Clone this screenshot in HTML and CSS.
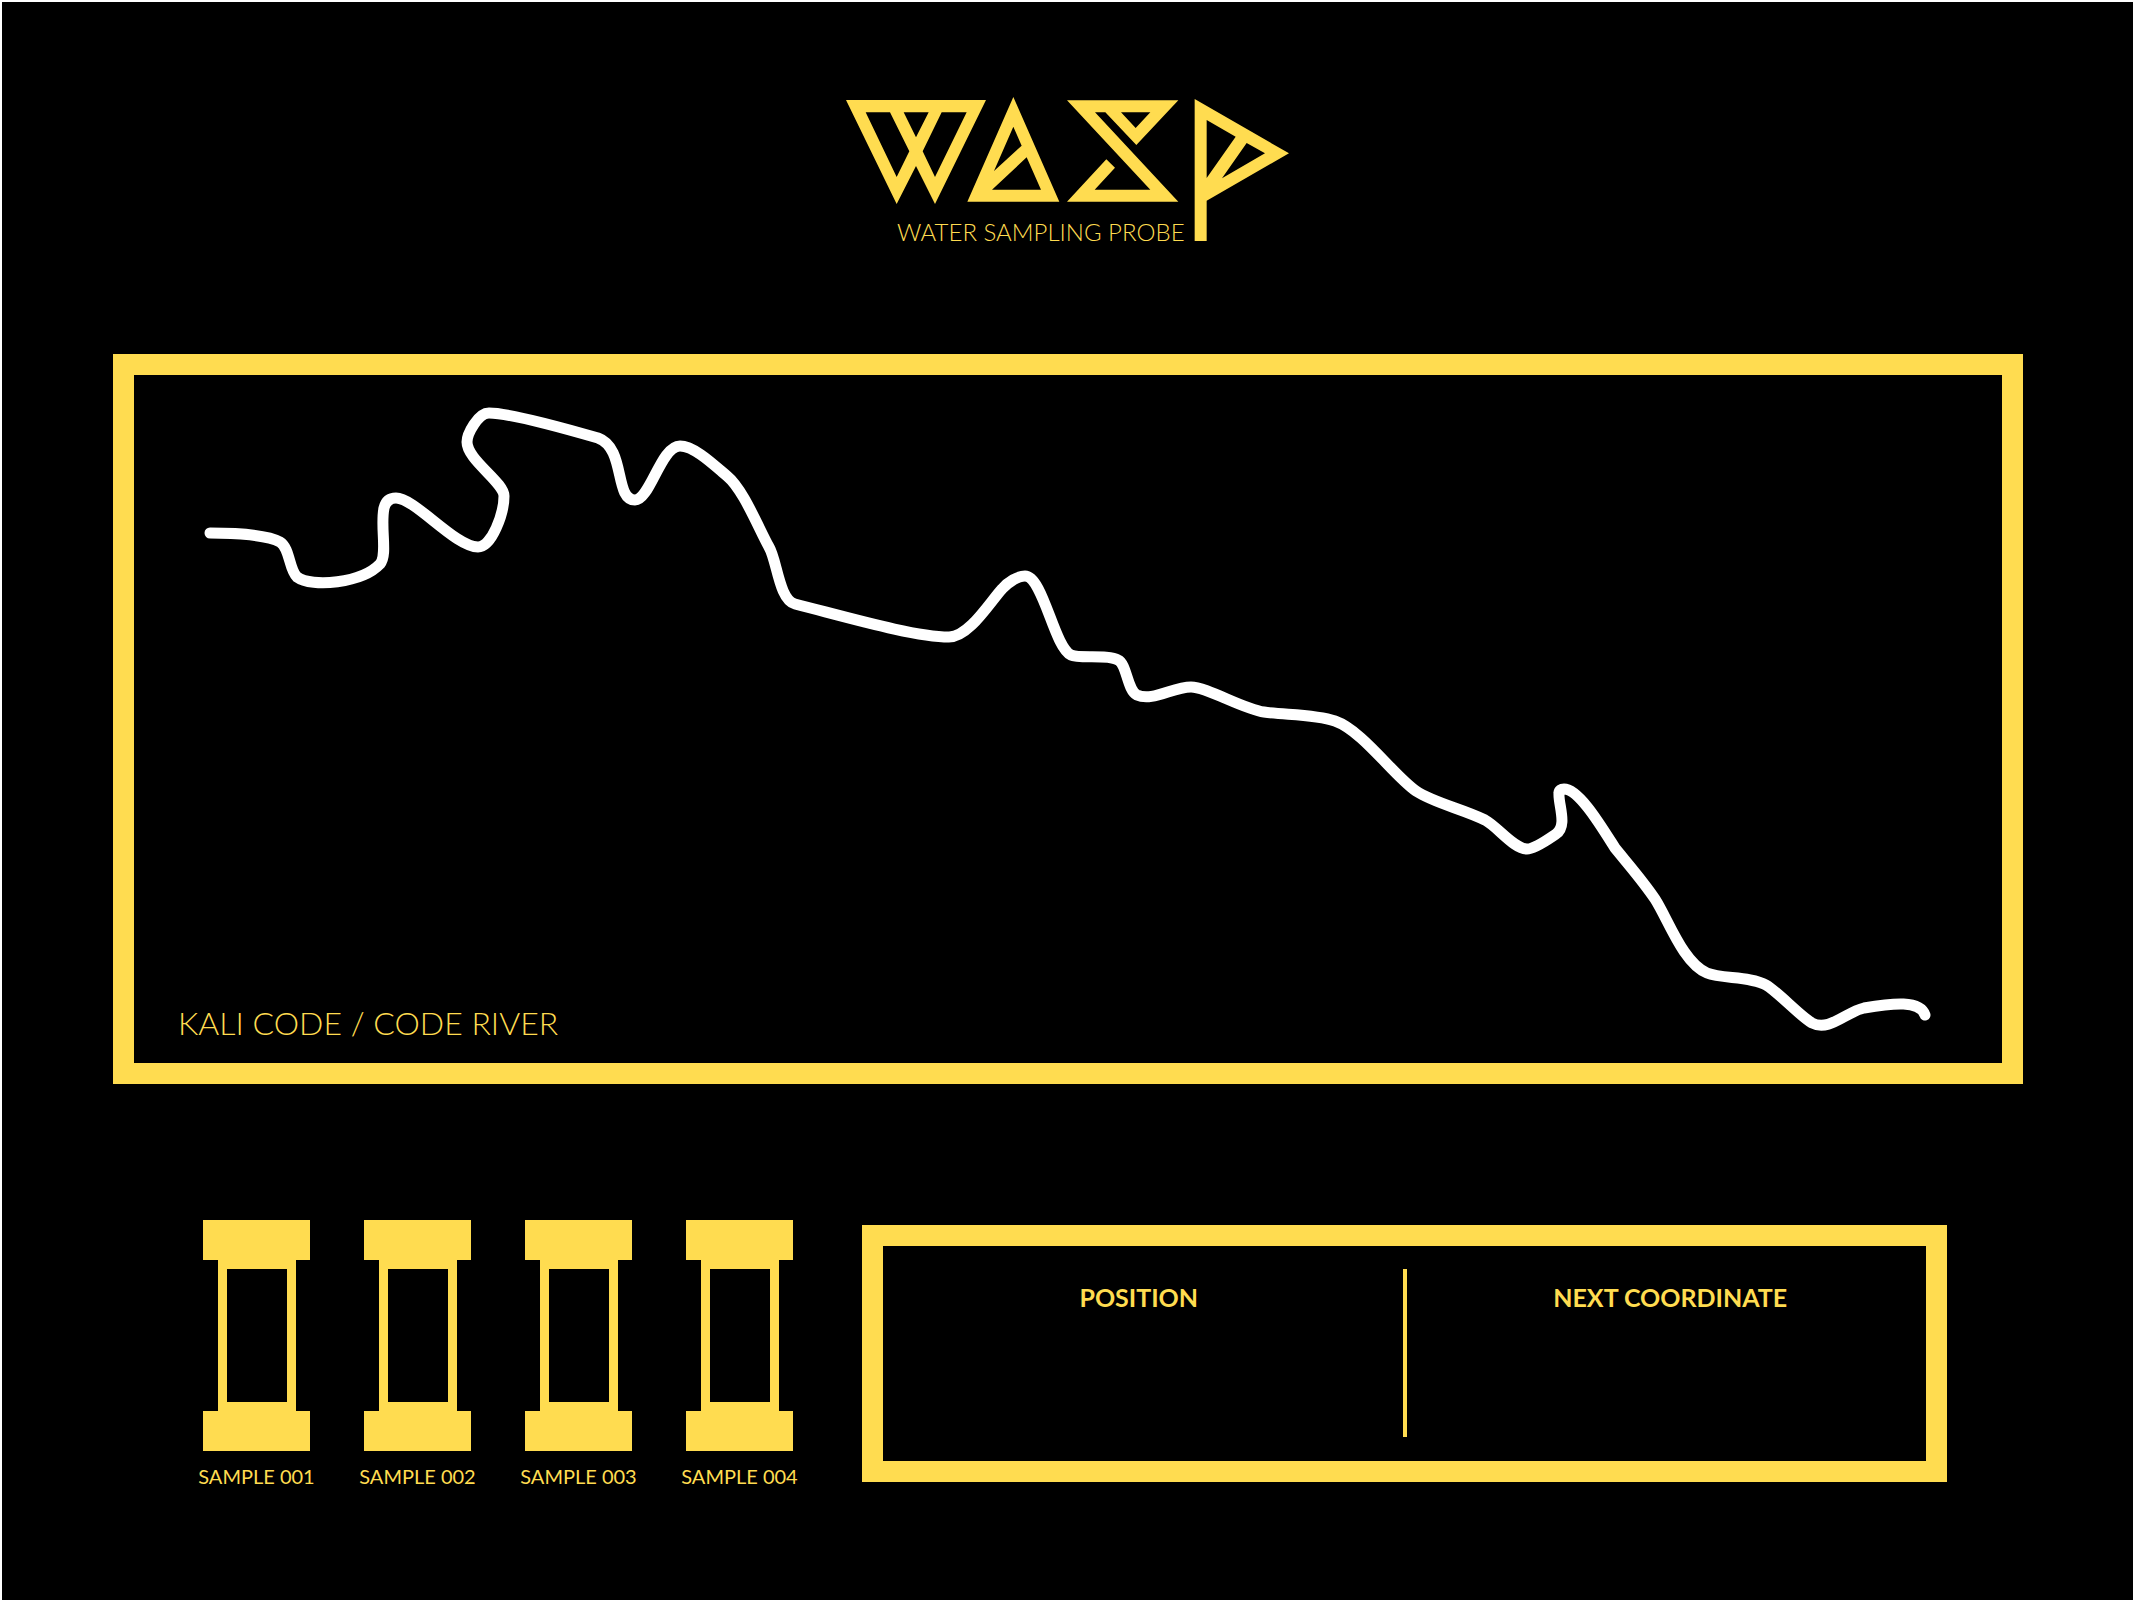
FILE: index.html
```html
<!DOCTYPE html>
<html lang="en">
<head>
<meta charset="utf-8">
<meta name="viewport" content="width=device-width, initial-scale=1">
<title>WASP – Water Sampling Probe</title>
<link rel="stylesheet" href="styles.css">
</head>
<body>
<div class="page">
  <header class="brand">
    <svg class="brand-logo" viewBox="48 51 1329 432" role="img" aria-label="WASP">
      <g fill="currentColor" fill-rule="evenodd">
        <path d="M48 60H468L315 372L258 258L200 372ZM107 97L200 291L238 214L180 97ZM221 97L258 172L296 97ZM335 97L278 214L315 291L410 97Z"/>
        <path d="M550 51L688 365H412ZM550 140L492 273L575 197ZM590 232L486 329H633Z"/>
        <path d="M711 61H1045L919 195L826 97H795L1045 365H711L829 238L855 263L794 329H961ZM873 97L917 144L961 97Z"/>
        <path d="M1094 57L1377 220L1130 362V483H1094ZM1130 120V294L1217 170ZM1250 189L1176 295L1305 220Z"/>
      </g>
    </svg>
    <p class="brand-tagline">WATER SAMPLING PROBE</p>
  </header>

  <main class="content">
    <section class="map frame" aria-labelledby="map-title">
      <svg class="map-river" viewBox="134 375 1868 688" aria-hidden="true">
        <path d="M210 533C235 533 268 535 280 542C290 548 289 570 297 577C312 588 362 583 380 564C388 555 380 527 384 508C386 500 391 498 396 498C415 498 455 547 478 547C492 547 504 513 504 496C504 482 467 460 467 442C467 434 478 413 489 413C510 413 560 427 598 438C626 448 614 500 635 500C650 500 661 446 680 446C695 446 716 467 727 476C743 489 758 527 769 547C777 560 779 600 795 604C850 618 915 637 949 637C969 637 990 602 1002 589C1008 582 1018 576 1025 576C1043 576 1054 647 1071 655C1079 659 1108 654 1118 660C1127 664 1127 690 1137 695C1152 702 1173 687 1191 687C1207 687 1243 709 1264 712C1285 715 1315 714 1335 721C1363 731 1393 775 1416 791C1434 803 1463 809 1485 820C1498 827 1514 849 1527 849C1535 849 1550 838 1556 834C1568 826 1558 804 1559 793C1559 790 1561 789 1564 789C1579 789 1601 826 1615 848C1628 864 1643 881 1655 899C1668 919 1683 963 1707 973C1722 979 1750 976 1766 985C1778 992 1800 1016 1812 1023C1829 1032 1846 1012 1864 1008C1893 1003 1920 1000 1925 1015"/>
      </svg>
      <h1 class="map-title" id="map-title">KALI CODE / CODE RIVER</h1>
    </section>

    <div class="status">
      <ul class="samples">
        <li class="sample"><span class="tube"><span class="tube-cap"></span><span class="tube-body"></span><span class="tube-cap"></span></span><span class="sample-name">SAMPLE 001</span></li>
        <li class="sample"><span class="tube"><span class="tube-cap"></span><span class="tube-body"></span><span class="tube-cap"></span></span><span class="sample-name">SAMPLE 002</span></li>
        <li class="sample"><span class="tube"><span class="tube-cap"></span><span class="tube-body"></span><span class="tube-cap"></span></span><span class="sample-name">SAMPLE 003</span></li>
        <li class="sample"><span class="tube"><span class="tube-cap"></span><span class="tube-body"></span><span class="tube-cap"></span></span><span class="sample-name">SAMPLE 004</span></li>
      </ul>
      <div class="coordinates frame">
        <section class="coordinate"><h2 class="coordinate-title">POSITION</h2></section>
        <section class="coordinate"><h2 class="coordinate-title">NEXT COORDINATE</h2></section>
      </div>
    </div>
  </main>
</div>
</body>
</html>
```
FILE: styles.css
```css
:root {
  --yellow: #ffdc50;
}

* {
  box-sizing: border-box;
}

body {
  margin: 0;
  background: #000;
  color: var(--yellow);
  font-family: Lato, "Open Sans", sans-serif;
}

h1,
h2,
p,
ul {
  margin: 0;
  padding: 0;
}

.page {
  min-height: 100vh;
  padding: 95px 110px 96px;
  border: 2px solid #fff;
}

.frame {
  border: 21px solid var(--yellow);
}

/* Brand */
.brand {
  display: grid;
  justify-content: center;
  margin-bottom: 113px;
}

.brand-logo {
  grid-area: 1 / 1;
  width: 443px;
  height: 144px;
}

.brand-tagline {
  grid-area: 1 / 1;
  align-self: end;
  padding-left: 51px;
  font-size: 24px;
  font-weight: 300;
  line-height: 18px;
  white-space: nowrap;
}

/* River map */
.content {
  padding-left: 1px;
}

.map {
  display: grid;
}

.map-river {
  grid-area: 1 / 1;
  display: block;
  width: 100%;
  fill: none;
  stroke: #fff;
  stroke-width: 11;
  stroke-linecap: round;
  stroke-linejoin: round;
}

.map-title {
  grid-area: 1 / 1;
  align-self: end;
  padding: 0 44px 22px;
  font-size: 32px;
  font-weight: 300;
  line-height: 36px;
}

/* Samples and coordinates */
.status {
  display: flex;
  align-items: flex-start;
  gap: 42px;
  margin-top: 136px;
  padding: 0 76px 0 63px;
}

.samples {
  display: grid;
  grid-template-columns: repeat(4, 161px);
  list-style: none;
}

.sample {
  display: flex;
  flex-direction: column;
  align-items: center;
  gap: 13px;
}

.tube {
  display: flex;
  flex-direction: column;
  align-items: center;
}

.tube-cap {
  width: 107px;
  height: 40px;
  background: var(--yellow);
}

.tube-body {
  width: 78px;
  height: 151px;
  border: 9px solid var(--yellow);
}

.sample-name {
  font-size: 20px;
  line-height: 24px;
  white-space: nowrap;
}

.coordinates {
  flex: 1;
  display: flex;
  margin-top: 5px;
  padding: 23px 0 24px;
}

.coordinate {
  flex: 1;
  min-height: 168px;
  padding: 12px 8px 0 0;
  text-align: center;
}

.coordinate + .coordinate {
  padding: 12px 0 0 8px;
  border-left: 4px solid var(--yellow);
}

.coordinate-title {
  font-size: 25px;
  font-weight: 700;
  line-height: 32px;
}
```
